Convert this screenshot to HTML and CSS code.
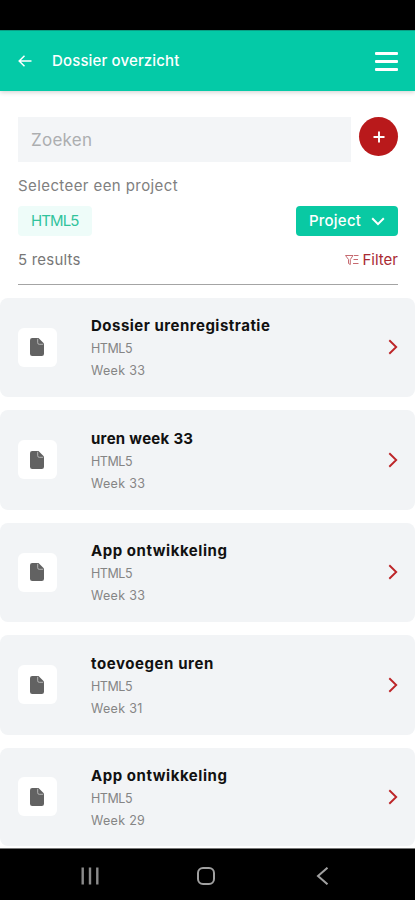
FILE: index.html
```html
<!DOCTYPE html>
<html lang="nl">
<head>
<meta charset="utf-8">
<meta name="viewport" content="width=device-width, initial-scale=1">
<title>Dossier overzicht</title>
<link rel="stylesheet" href="styles.css">
</head>
<body>
<svg class="defs" aria-hidden="true">
  <symbol id="doc" viewBox="0 0 14 18"><path fill="#626262" d="M2.200 0H8.500L14 5.500v10.300q0 2.200-2.200 2.200H2.200Q0 18 0 15.800V2.200Q0 0 2.200 0z"/><path d="M7.700.8v4q0 1.500 1.500 1.500h4" fill="none" stroke="#b5b5b5" stroke-width="1"/></symbol>
  <symbol id="next" viewBox="0 0 10 16"><path d="M1.300 1.300 8.200 8l-6.900 6.700" fill="none" stroke="#bd2528" stroke-width="1.900"/></symbol>
</svg>
<div class="status"></div>
<header class="appbar">
  <svg class="back" viewBox="0 0 14 12"><path d="M13.500 6H1.300M6.500.8 1.200 6l5.300 5.200" fill="none" stroke="#fff" stroke-width="1.500"/></svg>
  <h1>Dossier overzicht</h1>
  <div class="menu"><i></i><i></i><i></i></div>
</header>
<main>
  <section class="controls">
    <div class="search-row">
      <div class="search">Zoeken</div>
      <div class="add"><svg viewBox="0 0 12 12"><path d="M6 .5v11M.5 6h11" stroke="#fff" stroke-width="1.900"/></svg></div>
    </div>
    <p class="label">Selecteer een project</p>
    <div class="project-row">
      <span class="tag">HTML5</span>
      <span class="project"><span>Project</span><svg viewBox="0 0 14 9"><path d="m1.200 1.200 5.800 5.900 5.800-5.900" fill="none" stroke="#fff" stroke-width="2"/></svg></span>
    </div>
    <div class="result-row">
      <span class="count">5 results</span>
      <span class="filter"><svg viewBox="0 0 14 12"><path d="M.5 1.500h7.500L5.300 5.500v5L3.500 9.500v-4zM9 1.500h4.500M8.500 5.500h4.500M8 9.500h5.500" fill="none" stroke="#c66a70" stroke-width="1"/></svg><span>Filter</span></span>
    </div>
  </section>
  <section class="list">
    <article class="card"><div class="thumb"><svg><use href="#doc"/></svg></div><div class="info"><h2 class="t1">Dossier urenregistratie</h2><p class="proj">HTML5</p><p>Week 33</p></div><svg class="next"><use href="#next"/></svg></article>
    <article class="card"><div class="thumb"><svg><use href="#doc"/></svg></div><div class="info"><h2 class="t2">uren week 33</h2><p class="proj">HTML5</p><p>Week 33</p></div><svg class="next"><use href="#next"/></svg></article>
    <article class="card"><div class="thumb"><svg><use href="#doc"/></svg></div><div class="info"><h2 class="t3">App ontwikkeling</h2><p class="proj">HTML5</p><p>Week 33</p></div><svg class="next"><use href="#next"/></svg></article>
    <article class="card"><div class="thumb"><svg><use href="#doc"/></svg></div><div class="info"><h2 class="t4">toevoegen uren</h2><p class="proj">HTML5</p><p>Week 31</p></div><svg class="next"><use href="#next"/></svg></article>
    <article class="card"><div class="thumb"><svg><use href="#doc"/></svg></div><div class="info"><h2 class="t3">App ontwikkeling</h2><p class="proj">HTML5</p><p>Week 29</p></div><svg class="next"><use href="#next"/></svg></article>
  </section>
</main>
<nav class="navbar">
  <svg viewBox="0 0 18 18"><path d="M1.700.5v17M9 .5v17M16.300.5v17" stroke="#8b8b8b" stroke-width="2.400"/></svg>
  <svg viewBox="0 0 18 18"><rect x="1" y="1" width="16" height="16" rx="5" fill="none" stroke="#a0a0a0" stroke-width="2"/></svg>
  <svg viewBox="0 0 18 18"><path d="M14.500.7 5 9l9.500 8.300" fill="none" stroke="#a0a0a0" stroke-width="2"/></svg>
</nav>
</body>
</html>
```
FILE: styles.css
```css
* { box-sizing: border-box; margin: 0; padding: 0; }
body {
  width: 415px;
  height: 900px;
  overflow: hidden;
  display: flex;
  flex-direction: column;
  background: #fff;
  font-family: Inter, "Open Sans", sans-serif;
  white-space: nowrap;
}
svg { display: block; flex: none; }
.defs { width: 0; height: 0; position: absolute; }
.status { height: 30px; background: #000; flex: none; }
.appbar {
  height: 61px;
  flex: none;
  display: flex;
  align-items: center;
  padding: 0 17px 0 18px;
  background: #04caa7;
  border-top: 1px solid #0a9e84;
  box-shadow: 0 1px 5px rgba(0, 0, 0, .2);
}
.back { width: 14px; height: 12px; }
.appbar h1 { margin-left: 20px; font-size: 15px; font-weight: 500; line-height: 20px; color: #fff; letter-spacing: .14px; }
.menu { margin-left: auto; width: 23px; display: grid; gap: 5px; }
.menu i { height: 3px; background: #fff; border-radius: 1px; }
main { flex: 1; min-height: 0; overflow: hidden; border-bottom: 1px solid #777; }
.controls { margin: 0 17px 0 18px; padding-top: 26px; height: 194px; border-bottom: 1px solid #a4a4a4; }
.search-row { display: flex; justify-content: space-between; }
.search { width: 333px; height: 45px; padding-left: 13px; background: #f3f5f7; color: #acaeb0; font-size: 17px; line-height: 46px; letter-spacing: .25px; }
.add { width: 39px; height: 39px; border-radius: 50%; background: #b9191b; display: grid; place-items: center; }
.add svg { width: 12px; height: 12px; }
.label { margin-top: 13px; font-size: 15px; line-height: 22px; color: #808080; letter-spacing: .41px; }
.project-row { margin-top: 9px; display: flex; justify-content: space-between; height: 30px; }
.tag { width: 74px; padding-left: 13px; border-radius: 4px; background: #eefcf9; color: #31c39c; font-size: 15px; line-height: 29px; letter-spacing: -.9px; }
.project { width: 102px; padding: 0 13px; border-radius: 4px; background: #09c9a3; color: #fff; font-size: 15px; font-weight: 500; line-height: 28px; letter-spacing: .22px; display: flex; align-items: center; justify-content: space-between; }
.project svg { width: 14px; height: 9px; }
.result-row { margin-top: 13px; display: flex; justify-content: space-between; font-size: 15px; line-height: 22px; }
.count { color: #777; letter-spacing: .2px; }
.filter { display: flex; align-items: center; gap: 4px; color: #a92a32; }
.filter svg { width: 14px; height: 12px; }
.list { padding-top: 12.500px; display: grid; gap: 13px; }
.card { height: 99.500px; display: flex; align-items: center; padding: 0 17px 0 18px; background: #f2f4f6; border-radius: 8px; }
.card:last-child { height: 98px; padding-bottom: 0; }
.thumb { width: 39px; height: 39px; border-radius: 6px; background: #fff; display: grid; place-items: center; }
.thumb svg { width: 14px; height: 18px; margin-right: 1px; }
.info { margin-left: 34px; padding-top: 1px; }
.info h2 { font-size: 15px; font-weight: 700; line-height: 25px; color: #111; }
.info .t1 { letter-spacing: .49px; }
.info .t2 { letter-spacing: .28px; }
.info .t3 { letter-spacing: .54px; }
.info .t4 { letter-spacing: .58px; }
.info p { font-size: 12.500px; line-height: 22px; color: #858585; letter-spacing: .3px; }
.info .proj { letter-spacing: -.45px; }
.next { width: 10px; height: 16px; margin-left: auto; }
.navbar { height: 51px; flex: none; background: #000; display: flex; justify-content: space-between; align-items: center; padding: 2px 84px 0 81px; }
.navbar svg { width: 18px; height: 18px; }
```
